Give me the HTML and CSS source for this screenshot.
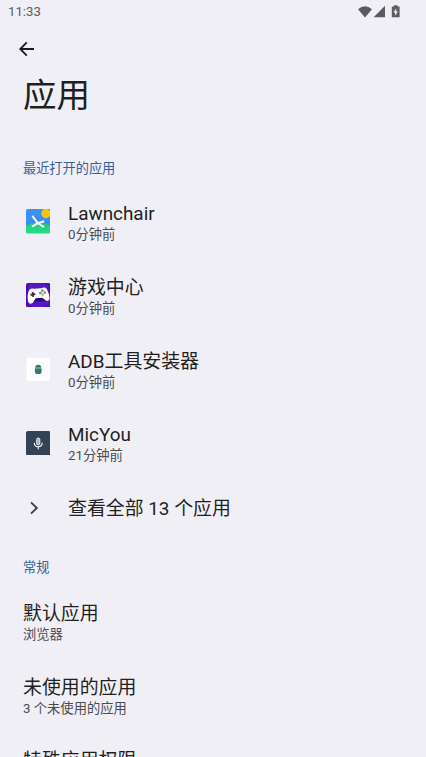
FILE: index.html
```html
<!DOCTYPE html>
<html lang="zh-CN">
<head>
<meta charset="utf-8">
<title>应用</title>
<link rel="stylesheet" href="styles.css">
</head>
<body>
<div class="screen">
  <header class="status">
    <span class="clock">11:33</span>
    <svg class="status-icons" width="44" height="16" viewBox="0 0 44 16">
      <path d="M0 5.2Q7 -.8 14 5.2L7 13.4Z"/>
      <path d="M15.6 13.2L27 1.8V13.2Z"/>
      <path fill-rule="evenodd" d="M36 1.2h3.400v1.300h2.200V13.300h-7.800V2.500H36ZM38.200 4.300L35.400 8.600h1.700v3.200l2.900-4.300h-1.800Z"/>
    </svg>
  </header>
  <nav class="toolbar">
    <svg width="16" height="16" viewBox="0 0 16 16" class="line"><path d="M15 8H1.400M7.800 1.400L1.200 8L7.800 14.600"/></svg>
  </nav>
  <h1 class="heading">应用</h1>
  <h2 class="category">最近打开的应用</h2>
  <section>
    <div class="row">
      <div class="icon"><svg width="24.500" height="24.500" viewBox="0 0 25 25">
        <defs>
          <linearGradient id="sky" x2="0" y2="1"><stop stop-color="#3f91f5"/><stop offset="1" stop-color="#348dea"/></linearGradient>
          <linearGradient id="grass" x2="0" y2="1"><stop stop-color="#2ec66e"/><stop offset="1" stop-color="#1ee188"/></linearGradient>
          <clipPath id="tile"><rect width="25" height="25" rx="2"/></clipPath>
        </defs>
        <g clip-path="url(#tile)"><rect width="25" height="25" fill="url(#sky)"/><path d="M0 17Q12 10.500 25 17V25H0Z" fill="url(#grass)"/><circle cx="20.300" cy="4.500" r="4.700" fill="#fcc70b"/><path d="M6.500 7L11.800 14L18.500 18.600M6.200 18L12 14.400L18.500 12.500" fill="none" stroke="#fff" stroke-width="2"/></g>
      </svg></div>
      <div class="text"><div class="title">Lawnchair</div><div class="summary">0分钟前</div></div>
    </div>
    <div class="row">
      <div class="icon"><svg width="24.500" height="24.500" viewBox="0 0 25 25">
        <rect width="25" height="25" rx="2" fill="#4710ac"/><path d="M2 2Q13-3 23 3V22Q12 28 2 22Z" fill="#5617c4"/><path d="M8 14h10l2 5H6Z" fill="#2b0878"/>
        <g transform="rotate(-7 12.500 12.500)"><path d="M5 5.200Q7 4.300 9 5.500L16.500 5.700Q20 4.300 21.800 7Q24 12.500 23.700 17Q23 20.500 19.500 18.700L16.200 15.500L9.500 15.300L6 19.500Q2 21.500 1.300 17Q1.200 8.500 5 5.200Z" fill="#fff"/>
        <path d="M4.700 11h5M7.200 8.500v5" stroke="#353047" stroke-width="1.900"/><circle cx="17.200" cy="8.400" r="1.400" fill="#37bd59"/><circle cx="14.900" cy="10.600" r="1.400" fill="#27a8d8"/><circle cx="19.400" cy="10.600" r="1.400" fill="#c65adc"/><circle cx="17" cy="12.800" r="1.400" fill="#f3b32b"/></g>
      </svg></div>
      <div class="text"><div class="title">游戏中心</div><div class="summary">0分钟前</div></div>
    </div>
    <div class="row">
      <div class="icon"><svg width="24.500" height="24.500" viewBox="0 0 25 25">
        <rect x=".25" y=".25" width="24.500" height="24.500" rx="2" fill="#fff" stroke="#e8e8eb" stroke-width=".5"/><circle cx="12.500" cy="12.500" r="8" fill="none" stroke="#f0f1f1" stroke-width=".7"/>
        <path d="M9.300 11Q9.500 7.900 12.500 7.900T15.700 11ZM9.100 11.500h6.800v3.800q0 1.400-1.600 2h-3.600q-1.600-.6-1.600-2Z" fill="#2b7d69"/>
      </svg></div>
      <div class="text"><div class="title">ADB工具安装器</div><div class="summary">0分钟前</div></div>
    </div>
    <div class="row">
      <div class="icon"><svg width="24.500" height="24.500" viewBox="0 0 25 25">
        <rect width="25" height="25" rx="2" fill="#324355"/><rect x="10.900" y="7.100" width="3.200" height="7" rx="1.600" fill="#a0acb7" stroke="#fff" stroke-width=".9"/><path d="M8.500 12Q8.500 16 12.500 16T16.500 12M12.500 16v2.500" fill="none" stroke="#fff" stroke-width="1.100"/>
      </svg></div>
      <div class="text"><div class="title">MicYou</div><div class="summary">21分钟前</div></div>
    </div>
    <div class="row row-single">
      <div class="icon"><svg width="16" height="16" viewBox="0 0 16 16" class="line chevron"><path d="M5 2.400L10.800 8L5 13.600"/></svg></div>
      <div class="title">查看全部 13 个应用</div>
    </div>
  </section>
  <h2 class="category general">常规</h2>
  <section>
    <div class="row"><div class="text"><div class="title">默认应用</div><div class="summary">浏览器</div></div></div>
    <div class="row"><div class="text"><div class="title">未使用的应用</div><div class="summary">3 个未使用的应用</div></div></div>
    <div class="row"><div class="text"><div class="title">特殊应用权限</div><div class="summary">&nbsp;</div></div></div>
  </section>
</div>
</body>
</html>
```
FILE: styles.css
```css
* { box-sizing: border-box; }
body { margin: 0; background: #f0eff5; color: #1f1f22; font-family: Roboto, "Noto Sans CJK SC", sans-serif; }
.screen { width: 426px; height: 757px; overflow: hidden; }
.screen section { display: flow-root; }
.status { height: 24px; padding: 0 24px 0 8px; display: flex; align-items: center; justify-content: space-between; color: #5d5d61; }
.clock { font-size: 13.2px; line-height: 24px; }
.status-icons { fill: #5b5b5f; margin: -1px 0 0 0; }
.toolbar { height: 52px; padding: 17px 19px; }
.toolbar svg { display: block; }
.line { fill: none; stroke: #1b1b1e; stroke-width: 1.8; }
.heading { margin: 0; padding-left: 23px; height: 82px; font-size: 33.5px; line-height: 40px; font-weight: 400; }
.category { margin: 0; padding: 1px 0 0 23px; height: 26.4px; font-size: 13.2px; line-height: 20px; font-weight: 400; color: #33629c; }
.general { margin-top: 20px; height: 27px; }
.row { height: 73.85px; padding-left: 23px; display: flex; align-items: center; }
.row-single { height: 57.5px; }
.text { padding-top: 3px; }
.icon { width: 45px; flex: none; padding-left: 2.7px; }
.icon svg { display: block; }
.icon .chevron { margin: -2px 0 0 0; stroke: #44474e; stroke-width: 2; }
.title { font-size: 18.9px; line-height: 24px; white-space: nowrap; }
.row-single .title { padding-top: 1px; }
.summary { font-size: 13.3px; line-height: 18px; color: #4b4c52; white-space: nowrap; }
```
